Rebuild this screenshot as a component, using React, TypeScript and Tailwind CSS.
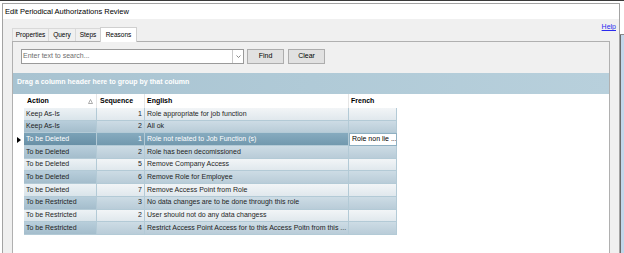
import React from "react";

type Reason = { action: string; seq: number; english: string; french?: string };

const reasons: Reason[] = [
  { action: "Keep As-Is", seq: 1, english: "Role appropriate for job function" },
  { action: "Keep As-Is", seq: 2, english: "All ok" },
  { action: "To be Deleted", seq: 1, english: "Role not related to Job Function (s)", french: "Role non lie ..." },
  { action: "To be Deleted", seq: 2, english: "Role has been decomissioned" },
  { action: "To be Deleted", seq: 5, english: "Remove Company Access" },
  { action: "To be Deleted", seq: 6, english: "Remove Role for Employee" },
  { action: "To be Deleted", seq: 7, english: "Remove Access Point from Role" },
  { action: "To be Restricted", seq: 3, english: "No data changes are to be done through this role" },
  { action: "To be Restricted", seq: 2, english: "User should not do any data changess" },
  { action: "To be Restricted", seq: 4, english: "Restrict Access Point Access for to this Access Poitn from this ..." },
];

const selectedRow = 2;

const tabs = [
  { label: "Properties", w: "w-[36px]" },
  { label: "Query", w: "w-[27px]" },
  { label: "Steps", w: "w-[25px]" },
];

const cellBase =
  "h-full flex items-center px-[2px] border-r border-b border-[#b3cad6] whitespace-nowrap overflow-hidden";

const App: React.FC = () => {
  return (
    <div className="w-[624px] h-[253px] overflow-hidden bg-white border-t border-[#3a3a3a] flex font-['Liberation_Sans',Arial,sans-serif] text-black">
      {/* window */}
      <div className="w-[620px] h-full pl-[2px] bg-white">
        <div className="h-full flex flex-col border-l border-r border-t border-[#a3a3a3] mt-[2px]">
          <div className="h-[15px] bg-white flex items-center pl-[2px] text-[7.5px]">
            Edit Periodical Authorizations Review
          </div>

          <div className="flex-1 bg-[#f0f0f0] flex flex-col min-h-0">
            {/* tabs + help */}
            <div className="h-[22px] flex justify-between items-end pl-[9px] pr-[3px]">
              <div className="flex items-end">
                {tabs.map((t) => (
                  <div
                    key={t.label}
                    className={`${t.w} h-[13px] flex items-center justify-center text-[6.5px] border-t border-l border-[#d9d9d9] last:border-r bg-[#f0f0f0]`}
                  >
                    {t.label}
                  </div>
                ))}
                <div className="w-[37px] h-[15px] -mb-px relative z-10 flex items-center justify-center text-[6.5px] bg-white border-t border-l border-r border-[#cfcfcf]">
                  Reasons
                </div>
              </div>
              <a className="self-start mt-[3px] text-[7px] text-[#2a2aee] underline">Help</a>
            </div>

            {/* tab panel */}
            <div className="flex-1 mx-[9px] border border-b-0 border-[#b0b0b0] bg-[#f0f0f0] flex flex-col min-h-0">
              <div className="h-[31px] pt-[7px] pl-[8px] flex gap-[3px]">
                <div className="w-[223px] h-[15px] flex bg-white border border-[#9a9a9a]">
                  <div className="flex-1 flex items-center pl-[1px] text-[7px] text-[#6d6d6d]">
                    Enter text to search...
                  </div>
                  <div className="w-[11px] h-full border-l border-[#c8c8c8] flex items-center justify-center">
                    <svg width="5" height="3" viewBox="0 0 5 3">
                      <polyline points="0.5,0.5 2.5,2.5 4.5,0.5" fill="none" stroke="#6b6b6b" strokeWidth="0.8" />
                    </svg>
                  </div>
                </div>
                <button className="w-[37px] h-[15px] bg-[#e1e1e1] border border-[#adadad] text-[7px] flex items-center justify-center">
                  Find
                </button>
                <button className="w-[37px] h-[15px] ml-px bg-[#e1e1e1] border border-[#adadad] text-[7px] flex items-center justify-center">
                  Clear
                </button>
              </div>

              {/* group panel */}
              <div className="h-[21px] pl-[4px] pt-[4px] bg-gradient-to-r from-[#a8c3d1] via-[#b0cad7] to-[#b8d0dc] text-white font-bold text-[7px] leading-[10px]">
                Drag a column header here to group by that column
              </div>

              {/* grid */}
              <div className="flex-1 bg-white">
                <div className="flex h-[14px] text-[7px] font-bold">
                  <div className="w-[11px]" />
                  <div className="w-[73px] flex items-center justify-between pl-[3px] pr-[3px] border-r border-[#e6e6e6]">
                    <span>Action</span>
                    <svg width="5" height="5" viewBox="0 0 5 5">
                      <polygon points="2.5,0.5 4.5,4.5 0.5,4.5" fill="none" stroke="#8a8a8a" strokeWidth="0.7" />
                    </svg>
                  </div>
                  <div className="w-[48px] flex items-center pl-[3px] border-r border-[#e6e6e6]">Sequence</div>
                  <div className="w-[204px] flex items-center pl-[2px] border-r border-[#e6e6e6]">English</div>
                  <div className="w-[48px] flex items-center pl-[2px]">French</div>
                </div>

                {reasons.map((r, i) => {
                  const sel = i === selectedRow;
                  const even = i % 2 === 1;
                  const actionBg = sel
                    ? "bg-gradient-to-b from-[#7ba2b7] to-[#6890a6] text-white"
                    : even
                    ? "bg-gradient-to-b from-[#b8cedb] to-[#a4bdcc]"
                    : "bg-gradient-to-b from-[#edf2f5] to-[#d9e4ea]";
                  const cellBg = sel
                    ? "bg-gradient-to-b from-[#86abbf] to-[#7299ae] text-white"
                    : even
                    ? "bg-gradient-to-b from-[#cddce5] to-[#b9ccd8]"
                    : "bg-gradient-to-b from-[#f2f5f7] to-[#e0e8ed]";
                  return (
                    <div key={i} className="flex h-[12.7px] text-[7px] text-[#1e1e1e]">
                      <div className="w-[11px] h-full flex items-center justify-center">
                        {sel && (
                          <svg width="4" height="6" viewBox="0 0 4 6">
                            <polygon points="0,0 4,3 0,6" fill="#000" />
                          </svg>
                        )}
                      </div>
                      <div className={`w-[73px] ${cellBase} ${actionBg}`}>{r.action}</div>
                      <div className={`w-[48px] ${cellBase} justify-end ${cellBg}`}>{r.seq}</div>
                      <div className={`w-[204px] ${cellBase} ${cellBg}`}>{r.english}</div>
                      {sel ? (
                        <div className="w-[48px] h-full flex items-center px-[2px] bg-white border border-[#8fb0c2] text-black whitespace-nowrap overflow-hidden">
                          {r.french}
                        </div>
                      ) : (
                        <div className={`w-[48px] ${cellBase} ${cellBg}`}>{r.french ?? ""}</div>
                      )}
                    </div>
                  );
                })}
              </div>
            </div>
          </div>
        </div>
      </div>

      {/* neighbouring window edge */}
      <div className="w-[4px] h-full flex flex-col">
        <div className="h-[34px] bg-white border-b border-[#8a8a8a]" />
        <div className="flex-1 bg-[#c3d7ea] border-l border-[#6a6a6a]" />
      </div>
    </div>
  );
};

export default App;
